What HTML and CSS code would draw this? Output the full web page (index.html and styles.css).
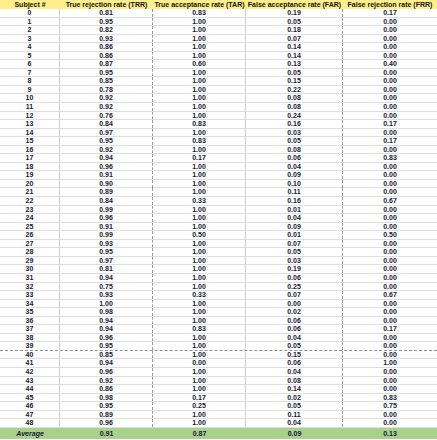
FILE: index.html
```html
<!DOCTYPE html>
<html>
<head>
<meta charset="utf-8">
<link rel="stylesheet" href="styles.css">
</head>
<body>
<div class="sheet">
  <div class="row head">
    <div class="c">Subject #</div>
    <div class="c">True rejection rate (<span class="sp">TRR</span>)</div>
    <div class="c">True acceptance rate (TAR)</div>
    <div class="c">False acceptance rate (FAR)</div>
    <div class="c">False rejection rate (<span class="sp">FRR</span>)</div>
  </div>
  <div class="row"><div class="c">0</div><div class="c">0.81</div><div class="c">0.83</div><div class="c">0.19</div><div class="c">0.17</div></div>
  <div class="row"><div class="c">1</div><div class="c">0.95</div><div class="c">1.00</div><div class="c">0.05</div><div class="c">0.00</div></div>
  <div class="row"><div class="c">2</div><div class="c">0.82</div><div class="c">1.00</div><div class="c">0.18</div><div class="c">0.00</div></div>
  <div class="row"><div class="c">3</div><div class="c">0.93</div><div class="c">1.00</div><div class="c">0.07</div><div class="c">0.00</div></div>
  <div class="row"><div class="c">4</div><div class="c">0.86</div><div class="c">1.00</div><div class="c">0.14</div><div class="c">0.00</div></div>
  <div class="row"><div class="c">5</div><div class="c">0.86</div><div class="c">1.00</div><div class="c">0.14</div><div class="c">0.00</div></div>
  <div class="row"><div class="c">6</div><div class="c">0.87</div><div class="c">0.60</div><div class="c">0.13</div><div class="c">0.40</div></div>
  <div class="row"><div class="c">7</div><div class="c">0.95</div><div class="c">1.00</div><div class="c">0.05</div><div class="c">0.00</div></div>
  <div class="row"><div class="c">8</div><div class="c">0.85</div><div class="c">1.00</div><div class="c">0.15</div><div class="c">0.00</div></div>
  <div class="row"><div class="c">9</div><div class="c">0.78</div><div class="c">1.00</div><div class="c">0.22</div><div class="c">0.00</div></div>
  <div class="row"><div class="c">10</div><div class="c">0.92</div><div class="c">1.00</div><div class="c">0.08</div><div class="c">0.00</div></div>
  <div class="row"><div class="c">11</div><div class="c">0.92</div><div class="c">1.00</div><div class="c">0.08</div><div class="c">0.00</div></div>
  <div class="row"><div class="c">12</div><div class="c">0.76</div><div class="c">1.00</div><div class="c">0.24</div><div class="c">0.00</div></div>
  <div class="row"><div class="c">13</div><div class="c">0.84</div><div class="c">0.83</div><div class="c">0.16</div><div class="c">0.17</div></div>
  <div class="row"><div class="c">14</div><div class="c">0.97</div><div class="c">1.00</div><div class="c">0.03</div><div class="c">0.00</div></div>
  <div class="row"><div class="c">15</div><div class="c">0.95</div><div class="c">0.83</div><div class="c">0.05</div><div class="c">0.17</div></div>
  <div class="row"><div class="c">16</div><div class="c">0.92</div><div class="c">1.00</div><div class="c">0.08</div><div class="c">0.00</div></div>
  <div class="row"><div class="c">17</div><div class="c">0.94</div><div class="c">0.17</div><div class="c">0.06</div><div class="c">0.83</div></div>
  <div class="row"><div class="c">18</div><div class="c">0.96</div><div class="c">1.00</div><div class="c">0.04</div><div class="c">0.00</div></div>
  <div class="row"><div class="c">19</div><div class="c">0.91</div><div class="c">1.00</div><div class="c">0.09</div><div class="c">0.00</div></div>
  <div class="row"><div class="c">20</div><div class="c">0.90</div><div class="c">1.00</div><div class="c">0.10</div><div class="c">0.00</div></div>
  <div class="row"><div class="c">21</div><div class="c">0.89</div><div class="c">1.00</div><div class="c">0.11</div><div class="c">0.00</div></div>
  <div class="row"><div class="c">22</div><div class="c">0.84</div><div class="c">0.33</div><div class="c">0.16</div><div class="c">0.67</div></div>
  <div class="row"><div class="c">23</div><div class="c">0.99</div><div class="c">1.00</div><div class="c">0.01</div><div class="c">0.00</div></div>
  <div class="row"><div class="c">24</div><div class="c">0.96</div><div class="c">1.00</div><div class="c">0.04</div><div class="c">0.00</div></div>
  <div class="row"><div class="c">25</div><div class="c">0.91</div><div class="c">1.00</div><div class="c">0.09</div><div class="c">0.00</div></div>
  <div class="row"><div class="c">26</div><div class="c">0.99</div><div class="c">0.50</div><div class="c">0.01</div><div class="c">0.50</div></div>
  <div class="row"><div class="c">27</div><div class="c">0.93</div><div class="c">1.00</div><div class="c">0.07</div><div class="c">0.00</div></div>
  <div class="row"><div class="c">28</div><div class="c">0.95</div><div class="c">1.00</div><div class="c">0.05</div><div class="c">0.00</div></div>
  <div class="row"><div class="c">29</div><div class="c">0.97</div><div class="c">1.00</div><div class="c">0.03</div><div class="c">0.00</div></div>
  <div class="row"><div class="c">30</div><div class="c">0.81</div><div class="c">1.00</div><div class="c">0.19</div><div class="c">0.00</div></div>
  <div class="row"><div class="c">31</div><div class="c">0.94</div><div class="c">1.00</div><div class="c">0.06</div><div class="c">0.00</div></div>
  <div class="row"><div class="c">32</div><div class="c">0.75</div><div class="c">1.00</div><div class="c">0.25</div><div class="c">0.00</div></div>
  <div class="row"><div class="c">33</div><div class="c">0.93</div><div class="c">0.33</div><div class="c">0.07</div><div class="c">0.67</div></div>
  <div class="row"><div class="c">34</div><div class="c">1.00</div><div class="c">1.00</div><div class="c">0.00</div><div class="c">0.00</div></div>
  <div class="row"><div class="c">35</div><div class="c">0.98</div><div class="c">1.00</div><div class="c">0.02</div><div class="c">0.00</div></div>
  <div class="row"><div class="c">36</div><div class="c">0.94</div><div class="c">1.00</div><div class="c">0.06</div><div class="c">0.00</div></div>
  <div class="row"><div class="c">37</div><div class="c">0.94</div><div class="c">0.83</div><div class="c">0.06</div><div class="c">0.17</div></div>
  <div class="row"><div class="c">38</div><div class="c">0.96</div><div class="c">1.00</div><div class="c">0.04</div><div class="c">0.00</div></div>
  <div class="row brk"><div class="c">39</div><div class="c">0.95</div><div class="c">1.00</div><div class="c">0.05</div><div class="c">0.00</div></div>
  <div class="row"><div class="c">40</div><div class="c">0.85</div><div class="c">1.00</div><div class="c">0.15</div><div class="c">0.00</div></div>
  <div class="row"><div class="c">41</div><div class="c">0.94</div><div class="c">0.00</div><div class="c">0.06</div><div class="c">1.00</div></div>
  <div class="row"><div class="c">42</div><div class="c">0.96</div><div class="c">1.00</div><div class="c">0.04</div><div class="c">0.00</div></div>
  <div class="row"><div class="c">43</div><div class="c">0.92</div><div class="c">1.00</div><div class="c">0.08</div><div class="c">0.00</div></div>
  <div class="row"><div class="c">44</div><div class="c">0.86</div><div class="c">1.00</div><div class="c">0.14</div><div class="c">0.00</div></div>
  <div class="row"><div class="c">45</div><div class="c">0.98</div><div class="c">0.17</div><div class="c">0.02</div><div class="c">0.83</div></div>
  <div class="row"><div class="c">46</div><div class="c">0.95</div><div class="c">0.25</div><div class="c">0.05</div><div class="c">0.75</div></div>
  <div class="row"><div class="c">47</div><div class="c">0.89</div><div class="c">1.00</div><div class="c">0.11</div><div class="c">0.00</div></div>
  <div class="row"><div class="c">48</div><div class="c">0.96</div><div class="c">1.00</div><div class="c">0.04</div><div class="c">0.00</div></div>
  <div class="row avg"><div class="c lbl">Average</div><div class="c">0.91</div><div class="c">0.87</div><div class="c">0.09</div><div class="c">0.13</div></div>
</div>
</body>
</html>
```

FILE: styles.css
```css
html, body {
  margin: 0;
  padding: 0;
  background: #ffffff;
}
.sheet {
  width: 437px;
  height: 440px;
  overflow: hidden;
  font-family: "Liberation Sans", Arial, sans-serif;
  font-weight: bold;
  font-size: 7px;
  color: #161833;
}
.row {
  display: grid;
  grid-template-columns: 60px 93px 93px 97px 94px;
  height: 8.56px;
  box-sizing: border-box;
  border-bottom: 1px solid #dedede;
}
.c {
  text-align: center;
  line-height: 7.56px;
  white-space: nowrap;
  box-sizing: border-box;
}
.row .c:nth-child(1),
.row .c:nth-child(3) {
  border-right: 1px solid #cfcfcf;
}
.row .c:nth-child(2),
.row .c:nth-child(4) {
  border-right: 1px dashed #9a9a9a;
}
.head {
  height: 9px;
  background: #ffee8c;
  border-bottom: 0;
  color: #141414;
}
.head .c {
  line-height: 9px;
  border-right: 0 !important;
}
.sp {
  background-image:
    linear-gradient(135deg, transparent 40%, #e23a3a 40%, #e23a3a 60%, transparent 60%),
    linear-gradient(45deg, transparent 40%, #e23a3a 40%, #e23a3a 60%, transparent 60%);
  background-size: 2px 1px;
  background-position: 0 100%, 1px 100%;
  background-repeat: repeat-x;
}
.brk {
  border-bottom: 1px dashed #8f8f8f;
}
.avg {
  height: 11.56px;
  background: #a9d18e;
  border-bottom: 0;
}
.avg .c {
  line-height: 11px;
  border-right: 0 !important;
}
.lbl {
  font-style: italic;
}
```
